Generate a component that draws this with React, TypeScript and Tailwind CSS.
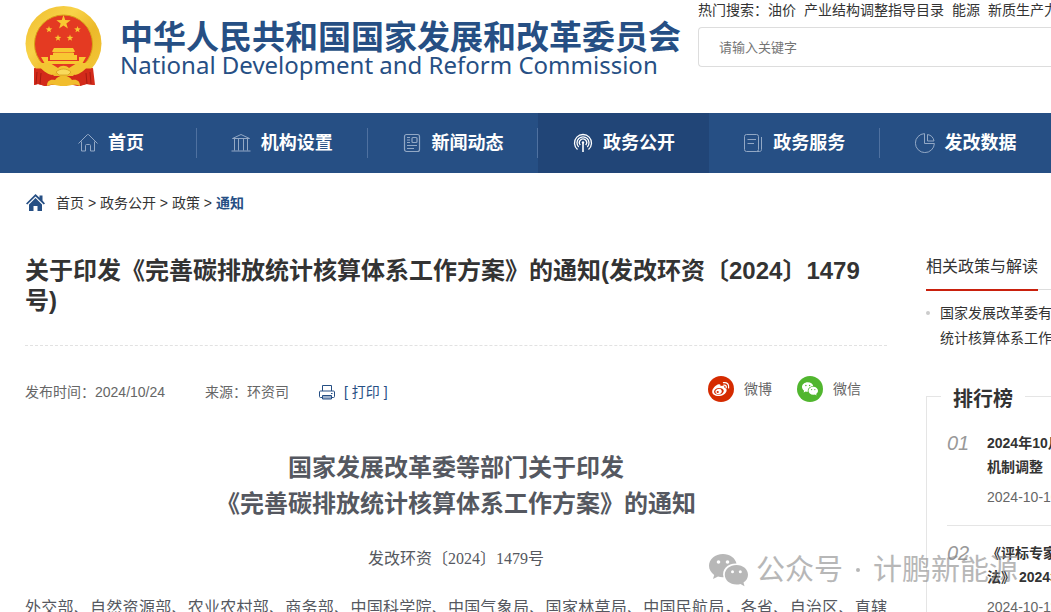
import React from 'react';

const star = (cx: number, cy: number, r: number) =>
  Array.from({ length: 10 }, (_, i) => {
    const a = -Math.PI / 2 + (i * Math.PI) / 5;
    const q = i % 2 ? r * 0.4 : r;
    return `${(cx + q * Math.cos(a)).toFixed(2)},${(cy + q * Math.sin(a)).toFixed(2)}`;
  }).join(' ');

function Emblem() {
  return (
    <svg viewBox="0 0 77 82" className="h-[82px] w-[77px] shrink-0" aria-hidden="true">
      <defs>
        <linearGradient id="gold" x1="0" y1="0" x2="1" y2="1">
          <stop offset="0" stopColor="#eebb2e" />
          <stop offset="0.35" stopColor="#f8d348" />
          <stop offset="0.6" stopColor="#ecb92a" />
          <stop offset="1" stopColor="#f4ca3a" />
        </linearGradient>
      </defs>
      <path d="M10 60l7-3 8 8 13.500-4 13.500 4 8-8 7 3 2 19-8-1-7 2-6-1H26l-6 1-7-2-4 1z" fill="#cf2618" />
      <path d="M13 65l-1 13M17 68l-1 10M61 68l1 10M64 65l1 13" stroke="#a61a10" strokeWidth="1" />
      <ellipse cx="38.500" cy="37.500" rx="38" ry="37.500" fill="url(#gold)" />
      <ellipse cx="38.500" cy="38" rx="29" ry="29" fill="#e43a22" stroke="#d9a018" />
      <path d="M9 62c4 1 8 1 12-2l8 10h19l8-10c4 3 8 3 12 2l2 17-8-1-7 2-6-1H26l-6 1-7-2-4 1z" fill="#d32a1a" />
      <path d="M12 66l-1 12M16 67l-1 11M61 67l1 11M65 66l1 12" stroke="#a61a10" strokeWidth="1" />
      <g fill="#f8c832">
        <polygon points={star(38.5, 16.5, 7.5)} />
        <polygon points={star(24, 23.5, 3.5)} />
        <polygon points={star(52.5, 23.5, 3.5)} />
        <polygon points={star(33, 32, 3.5)} />
        <polygon points={star(45, 32, 3.5)} />
        <path d="M29 42h19l2 3.500-2 1H29l-2-1zM28 47h21v2h3v5H25v-5h3zM16 51h7v4h31v-4h7l-4 7H20z" />
      </g>
      <path d="M12 57h13l8 5c3-3 8-3 11 0l8-5h13c-4 7-10 11-15 12l-6-3-5.500-2-5.500 2-6 3c-5-1-11-5-15-12z" fill="#f3c533" />
      <path d="M22 80c0-5 3-7 8-6 4-6 13-6 17 0 5-1 8 1 8 6-6-3-10 0-16.500 0S28 77 22 80z" fill="#f1bd2d" />
      <path d="M31 66c4-4 11-4 15 0l-3 3h-9z" fill="#f9da5c" stroke="#d39a1a" strokeWidth=".7" />
    </svg>
  );
}

const line = { fill: 'none', stroke: 'currentColor', strokeWidth: 1, viewBox: '0 0 20 20', 'aria-hidden': true } as const;
const cls = 'size-5 shrink-0';

const HomeLine = () => (
  <svg {...line} className={cls}>
    <path d="M.5 10.5L9 2c.7-.7 1.300-.7 2 0l8.500 8.500M3.500 8.500v9.500h4v-5.500c0-.6.4-1 1-1h3c.6 0 1 .4 1 1v5.500h4V8.500" />
  </svg>
);
const Bank = () => (
  <svg {...line} className={cls}>
    <path d="M1.500 5.500L10 1.500l8.500 4zM3.500 5.500v12M7.500 5.500v12M12.500 5.500v12M16.500 5.500v12M.5 18h19" />
  </svg>
);
const News = () => (
  <svg {...line} strokeWidth={1.2} className={cls}>
    <rect x="2.5" y="1.500" width="15" height="17" rx="2" />
    <rect x="10" y="4.500" width="5" height="5" rx="1" />
    <path d="M5 4.500h3M5 7h3M5 9.500h3M5 12.500h10M5 15.500h7" />
  </svg>
);
const Signal = () => (
  <svg {...line} strokeWidth={1.3} className={cls}>
    <path d="M4.500 16.500A8.500 8.500 0 1 1 15.500 16.500M5.700 14A6 6 0 1 1 14.300 14M7.300 12A3.600 3.600 0 1 1 12.700 12" />
    <circle cx="10" cy="9.500" r="1.200" fill="currentColor" stroke="none" />
    <path d="M10 10v9" strokeWidth="1.600" />
  </svg>
);
const Doc = () => (
  <svg {...line} className={cls}>
    <rect x="1.500" y="1.500" width="14" height="17" rx="2" />
    <path d="M4.500 6.500h8.500M4.500 10.500h6.500M18.500 4v12.500c0 1.200-.8 2-2 2h-3" />
  </svg>
);
const Pie = () => (
  <svg {...line} className={cls}>
    <path d="M9.500.6A9.500 9.500 0 1 0 19.400 10.500H9.500zM12.500 1.500a8 8 0 0 1 6.500 6.500h-6.500z" />
  </svg>
);

const nav = [
  { label: '首页', Icon: HomeLine },
  { label: '机构设置', Icon: Bank },
  { label: '新闻动态', Icon: News },
  { label: '政务公开', Icon: Signal, active: true },
  { label: '政务服务', Icon: Doc },
  { label: '发改数据', Icon: Pie },
];

const WeChat = ({ className, eye }: { className: string; eye: string }) => (
  <svg viewBox="0 0 39 33" className={className} fill="currentColor" aria-hidden="true">
    <path d="M14 0C6 0 0 5.200 0 11.800c0 3.700 2 6.900 5.200 9.100L4 25l5-2.500c1.800.6 3.600.8 5.500.7C12.500 15.500 18.500 9.300 27.500 9.500 26.300 4 20.700 0 14 0z" />
    <path d="M27.500 11C20.800 11 15.800 15.400 15.800 20.700S20.800 30.500 27.500 30.500c1.400 0 2.700-.2 4-.6l4 2.400-1-3.700c2.800-1.900 4.500-4.700 4.500-7.900C39 15.400 34 11 27.500 11z" />
    <g fill={eye}>
      <circle cx="9.500" cy="8" r="1.800" />
      <circle cx="18.500" cy="8" r="1.800" />
      <circle cx="23.500" cy="17.800" r="1.500" />
      <circle cx="31.300" cy="17.800" r="1.500" />
    </g>
  </svg>
);

const Weibo = () => (
  <svg viewBox="0 0 26 26" className="size-[26px]" aria-hidden="true">
    <circle cx="13" cy="13" r="13" fill="#d52b00" />
    <path d="M10.800 8.300c1.300-.3 2.100.4 1.700 2 2.700-1 4.500-.4 3.900 1.500 1.700.5 2.400 1.500 2.200 2.900-.4 3-4.200 5.300-8.200 5.300-3.600 0-6.200-1.800-6.200-4.300 0-3 3.600-6.800 6.600-7.400z" fill="#fff" />
    <ellipse cx="10.900" cy="15.300" rx="4.900" ry="3.300" fill="#d52b00" transform="rotate(-8 10.900 15.300)" />
    <ellipse cx="10.600" cy="15.500" rx="3.200" ry="2.600" fill="#fff" transform="rotate(-20 10.600 15.500)" />
    <circle cx="9.700" cy="16" r="1.100" fill="#d52b00" />
    <path d="M15.800 9.200c1.800-.3 2.800.8 2.400 2.400M15.500 6.700c3.500-.6 5.900 1.700 5.100 5.200" fill="none" stroke="#fff" strokeWidth="1.300" strokeLinecap="round" />
  </svg>
);

const ranks = [
  { no: '01', lines: ['2024年10月', '机制调整'], date: '2024-10-10' },
  { no: '02', lines: ['《评标专家', '法》 2024年'], date: '2024-10-11' },
];

export default function App() {
  return (
    <div className="relative h-screen overflow-hidden bg-white font-['Liberation_Sans','Noto_Sans_CJK_SC',sans-serif] text-sm text-[#333]">
      <header className="flex h-[113px] pl-[25px]">
        <a href="#" className="flex shrink-0 items-start pt-[6px] text-[#264f84]">
          <Emblem />
          <span className="ml-[18px] block w-[578px] whitespace-nowrap pt-[15px]">
            <span className="block text-[33px] font-bold leading-[34px]">中华人民共和国国家发展和改革委员会</span>
            <span className="block font-['Noto_Sans',sans-serif] text-2xl leading-[20px]">
              National Development and Reform Commission
            </span>
          </span>
        </a>
        <div className="min-w-0 flex-1">
          <div className="flex h-[27px] gap-2 overflow-hidden whitespace-nowrap leading-[20px]">
            <span>
              热门搜索：<a href="#">油价</a>
            </span>
            <a href="#">产业结构调整指导目录</a>
            <a href="#">能源</a>
            <a href="#">新质生产力</a>
          </div>
          <input
            type="text"
            aria-label="搜索"
            placeholder="请输入关键字"
            className="h-10 w-full rounded-l border border-r-0 border-[#ddd] px-5 text-[13px] placeholder:text-[#757575]"
          />
        </div>
      </header>

      <nav className="bg-[#264f84] pl-[26px]">
        <ul className="grid grid-cols-6">
          {nav.map(({ label, Icon, active }, i) => (
            <li key={label} className={active ? 'flex h-[60px] items-center bg-[#214577]' : 'flex h-[60px] items-center'}>
              <a
                href="#"
                className={
                  i === 3 || i === 5
                    ? 'flex h-[30px] flex-1 items-center justify-center gap-[10px] text-lg font-bold text-white'
                    : 'flex h-[30px] flex-1 items-center justify-center gap-[10px] border-r border-[#4f71a0] text-lg font-bold text-white'
                }
              >
                <span className={active ? 'text-white' : 'text-[#92a8c5]'}>
                  <Icon />
                </span>
                {label}
              </a>
            </li>
          ))}
        </ul>
      </nav>

      <div className="flex h-[60px] items-center gap-[10px] pl-[26px]">
        <svg viewBox="0 0 20 18" className="h-[18px] w-5" fill="#264f84" aria-hidden="true">
          <path d="M9.500 0l4 3.700V1.500h3v5l2.500 3-1.300 1.100L9.500 2.500l-8.200 8.100L0 9.500z" />
          <path d="M9.500 4l6.500 6.500V17h-4.500v-5h-4v5H3v-6.500z" />
        </svg>
        <div className="whitespace-pre">
          <a href="#">首页</a> &gt; <a href="#">政务公开</a> &gt; <a href="#">政策</a> &gt;{' '}
          <a href="#" className="font-bold text-[#264f84]">通知</a>
        </div>
      </div>

      <div className="flex pl-[25px]">
        <main className="w-[862px] shrink-0 pt-[23px]">
          <h1 className="border-b border-dashed border-[#e2e2e2] pb-[29px] text-2xl font-bold leading-[30px]">
            关于印发《完善碳排放统计核算体系工作方案》的通知(发改环资〔2024〕1479号)
          </h1>
          <div className="flex items-center justify-between pr-[26px] pt-[30px] text-[#666]">
            <div className="flex items-center pt-[6px]">
              <span className="w-[180px]">发布时间：2024/10/24</span>
              <span className="w-[114px]">来源：环资司</span>
              <button type="button" className="flex items-center gap-[9px] text-[#264f84]">
                <svg viewBox="0 0 16 16" className="size-4" fill="none" stroke="#264f84" aria-hidden="true">
                  <path d="M3.500 7V1.500h9V7M3.500 13.500h-2c-.6 0-1-.4-1-1V8c0-.6.4-1 1-1h13c.6 0 1 .4 1 1v4.500c0 .6-.4 1-1 1h-2M12 9.500h1.500" />
                  <path d="M3.500 11.500h9v3.500h-9z" fill="#9fb2cc" />
                </svg>
                [ 打印 ]
              </button>
            </div>
            <div className="flex gap-[25px]">
              <a href="#" className="flex items-center gap-[10px]">
                <Weibo />
                微博
              </a>
              <a href="#" className="flex items-center gap-[10px]">
                <span className="flex size-[26px] items-center justify-center rounded-full bg-[#51b62f] text-white">
                  <WeChat className="h-[14px] w-4" eye="#51b62f" />
                </span>
                微信
              </a>
            </div>
          </div>
          <h2 className="pt-[48px] text-center text-2xl font-bold leading-[36px] text-[#555860]">
            国家发展改革委等部门关于印发
            <br />
            《完善碳排放统计核算体系工作方案》的通知
          </h2>
          <div className="font-['Liberation_Serif','Noto_Sans_CJK_SC',serif] text-base text-[#555860]">
            <p className="pt-[25px] text-center leading-[24px]">发改环资〔2024〕1479号</p>
            <p className="pt-[25px] text-justify leading-[24px]">
              外交部、自然资源部、农业农村部、商务部、中国科学院、中国气象局、国家林草局、中国民航局，各省、自治区、直辖市、新疆生产建设兵团发展改革委
            </p>
          </div>
        </main>

        <aside className="ml-[39px] min-w-0 flex-1 overflow-hidden whitespace-nowrap pt-[17px]">
          <div className="flex items-end">
            <h3 className="border-b-2 border-[#c9200d] pb-[10px] pt-[5px] text-base leading-[24px]">相关政策与解读</h3>
            <span className="h-[2px] flex-1 border-t border-[#ddd]" />
          </div>
          <ul className="pt-[10px]">
            <li className="flex gap-[10px] leading-[25px]">
              <span className="mt-[10px] size-1 shrink-0 rounded-full bg-[#ccc]" />
              <a href="#">
                国家发展改革委有
                <br />
                统计核算体系工作
              </a>
            </li>
          </ul>
          <section className="mt-[33px]">
            <div className="flex h-[24px]">
              <span className="mt-[12px] w-[15px] border-l border-t border-[#e5e5e5]" />
              <h3 className="px-3 text-xl font-bold leading-[30px]">排行榜</h3>
              <span className="mt-[12px] flex-1 border-t border-[#e5e5e5]" />
            </div>
            <ol className="border-l border-[#e5e5e5] pl-5 pt-2">
              {ranks.map((r) => (
                <li key={r.no} className="flex h-[110px] border-b border-[#e5e5e5] pt-[15px]">
                  <span className="w-10 shrink-0 text-xl italic leading-[24px] text-[#999]">{r.no}</span>
                  <div className="leading-[24px]">
                    <a href="#" className="block font-bold">
                      {r.lines[0]}
                      <br />
                      {r.lines[1]}
                    </a>
                    <time className="block pt-[6px] text-[#666]">{r.date}</time>
                  </div>
                </li>
              ))}
            </ol>
          </section>
        </aside>
      </div>

      <div className="pointer-events-none absolute bottom-[20px] right-[33px] flex items-center gap-2 whitespace-nowrap text-[29px] leading-[44px] text-[#888] opacity-60">
        <WeChat className="h-[33px] w-[39px]" eye="#fff" />
        <span className="flex items-center gap-[13px]">
          公众号
          <span className="size-1 rounded-full bg-current" />
          <span>计鹏新能源</span>
        </span>
      </div>
    </div>
  );
}
